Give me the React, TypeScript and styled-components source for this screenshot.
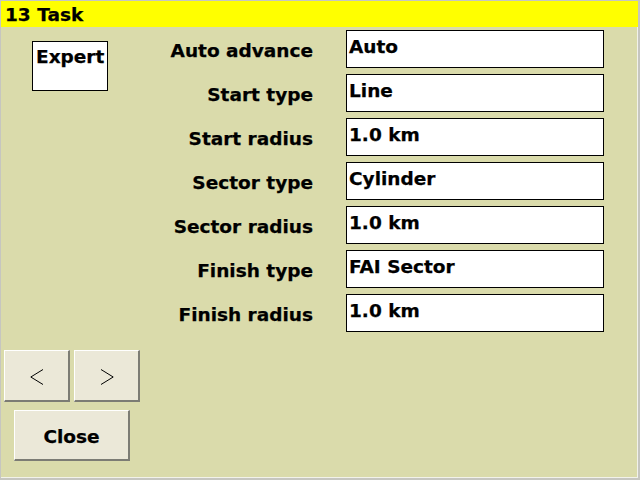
import React from "react";
import styled, { createGlobalStyle } from "styled-components";

const Global = createGlobalStyle`
  html, body { margin: 0; padding: 0; }
  body { font-family: "DejaVu Sans", "Liberation Sans", sans-serif; }
`;

const Window = styled.div`
  width: 640px;
  height: 480px;
  box-sizing: border-box;
  background: #dadbab;
  border-top: 1px solid #c6c6c0;
  border-left: 1px solid #c6c6c0;
  border-right: 2px solid #c6c6c0;
  border-bottom: 2px solid #c6c6c0;
  box-shadow: inset -1px -1px 0 #f2f2ea;
  display: flex;
  flex-direction: column;
  font-family: "DejaVu Sans", "Liberation Sans", sans-serif;
  font-weight: bold;
  font-size: 18.5px;
  -webkit-text-stroke: 0.25px #000;
  color: #000;
`;

const TitleBar = styled.div`
  height: 26px;
  box-sizing: border-box;
  background: #ffff00;
  padding: 3px 4px 0;
  line-height: 21px;
`;

const Body = styled.div`
  display: flex;
  flex-direction: column;
  padding-top: 3px;
`;

const FormArea = styled.div`
  display: flex;
`;

const LeftPane = styled.div`
  width: 140px;
  padding: 11px 0 0 31px;
  box-sizing: border-box;
`;

const ModeBox = styled.div`
  width: 76px;
  height: 50px;
  box-sizing: border-box;
  background: #fff;
  border: 1px solid #000;
  padding: 4px 0 0 3px;
  line-height: 21px;
`;

const FormGrid = styled.div`
  flex: 1;
  display: grid;
  grid-template-columns: 1fr 258px;
  grid-auto-rows: 38px;
  column-gap: 33px;
  row-gap: 6px;
  padding-right: 34px;
`;

const Label = styled.div`
  text-align: right;
  align-self: center;
  padding-top: 3px;
  line-height: 21px;
  white-space: nowrap;
`;

const Field = styled.div`
  background: #fff;
  border: 1px solid #000;
  box-sizing: border-box;
  padding: 5px 2px 0;
  line-height: 21px;
  white-space: nowrap;
`;

const ButtonArea = styled.div`
  margin-top: 18px;
  padding-left: 3px;
  display: flex;
  flex-direction: column;
  gap: 8px;
  align-items: flex-start;
`;

const NavRow = styled.div`
  display: flex;
  gap: 4px;
`;

const Button = styled.button<{ $w: number; $h: number; $indent?: number }>`
  width: ${(p) => p.$w}px;
  height: ${(p) => p.$h}px;
  margin-left: ${(p) => p.$indent ?? 0}px;
  box-sizing: border-box;
  background: #ebe8d8;
  border-style: solid;
  border-width: 1px 2px 2px 1px;
  border-color: #ffffff #7c7c74 #7c7c74 #ffffff;
  padding: 2px 0 0;
  display: flex;
  align-items: center;
  justify-content: center;
  font-family: "DejaVu Sans", "Liberation Sans", sans-serif;
  font-weight: bold;
  font-size: 18.5px;
  -webkit-text-stroke: 0.25px #000;
  line-height: 21px;
  color: #000;
`;

const Chevron = ({ dir }: { dir: "left" | "right" }) => (
  <svg width="14" height="16" viewBox="0 0 14 16">
    <polyline
      points={dir === "left" ? "13,0.5 0.8,8 13,15.5" : "1,0.5 13.2,8 1,15.5"}
      fill="none"
      stroke="#000"
      strokeWidth="1"
    />
  </svg>
);

const rows: [string, string][] = [
  ["Auto advance", "Auto"],
  ["Start type", "Line"],
  ["Start radius", "1.0 km"],
  ["Sector type", "Cylinder"],
  ["Sector radius", "1.0 km"],
  ["Finish type", "FAI Sector"],
  ["Finish radius", "1.0 km"],
];

export default function App() {
  return (
    <>
      <Global />
      <Window>
        <TitleBar>13 Task</TitleBar>
        <Body>
          <FormArea>
            <LeftPane>
              <ModeBox>Expert</ModeBox>
            </LeftPane>
            <FormGrid>
              {rows.map(([l, v]) => (
                <React.Fragment key={l}>
                  <Label>{l}</Label>
                  <Field>{v}</Field>
                </React.Fragment>
              ))}
            </FormGrid>
          </FormArea>
          <ButtonArea>
            <NavRow>
              <Button $w={66} $h={52} aria-label="previous">
                <Chevron dir="left" />
              </Button>
              <Button $w={66} $h={52} aria-label="next">
                <Chevron dir="right" />
              </Button>
            </NavRow>
            <Button $w={116} $h={51} $indent={10}>
              Close
            </Button>
          </ButtonArea>
        </Body>
      </Window>
    </>
  );
}
